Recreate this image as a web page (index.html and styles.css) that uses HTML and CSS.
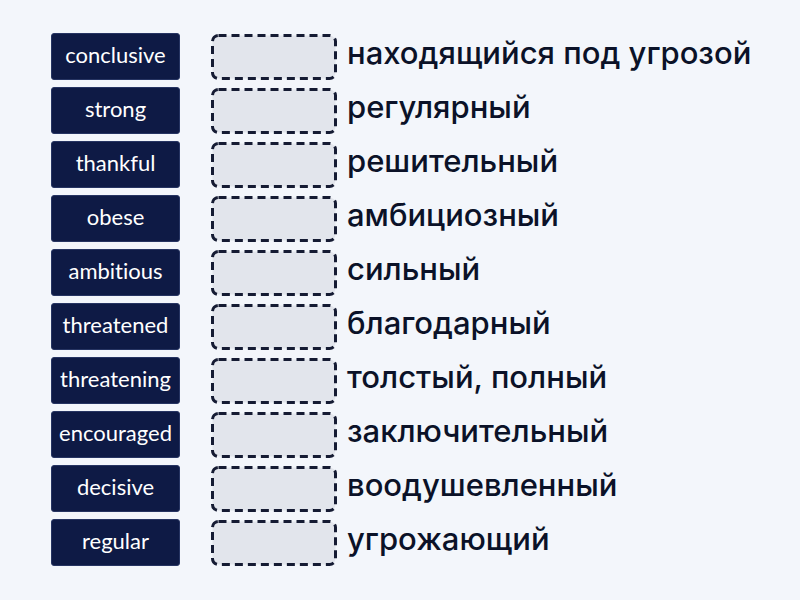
FILE: index.html
```html
<!DOCTYPE html>
<html lang="ru">
<head>
  <meta charset="UTF-8">
  <title>Сопоставление слов</title>
  <link rel="stylesheet" href="styles.css">
</head>
<body>
  <div class="board">
    <!-- Слова для перетаскивания -->
    <div class="words">
      <div class="word">conclusive</div>
      <div class="word">strong</div>
      <div class="word">thankful</div>
      <div class="word">obese</div>
      <div class="word">ambitious</div>
      <div class="word">threatened</div>
      <div class="word">threatening</div>
      <div class="word">encouraged</div>
      <div class="word">decisive</div>
      <div class="word">regular</div>
    </div>

    <!-- Пустые места и переводы -->
    <div class="targets">
      <div class="row"><svg class="slot" viewBox="0 0 126 46"><rect x="1.5" y="1.5" width="123" height="43" rx="6"/></svg><span class="meaning">находящийся под угрозой</span></div>
      <div class="row"><svg class="slot" viewBox="0 0 126 46"><rect x="1.5" y="1.5" width="123" height="43" rx="6"/></svg><span class="meaning">регулярный</span></div>
      <div class="row"><svg class="slot" viewBox="0 0 126 46"><rect x="1.5" y="1.5" width="123" height="43" rx="6"/></svg><span class="meaning">решительный</span></div>
      <div class="row"><svg class="slot" viewBox="0 0 126 46"><rect x="1.5" y="1.5" width="123" height="43" rx="6"/></svg><span class="meaning">амбициозный</span></div>
      <div class="row"><svg class="slot" viewBox="0 0 126 46"><rect x="1.5" y="1.5" width="123" height="43" rx="6"/></svg><span class="meaning">сильный</span></div>
      <div class="row"><svg class="slot" viewBox="0 0 126 46"><rect x="1.5" y="1.5" width="123" height="43" rx="6"/></svg><span class="meaning">благодарный</span></div>
      <div class="row"><svg class="slot" viewBox="0 0 126 46"><rect x="1.5" y="1.5" width="123" height="43" rx="6"/></svg><span class="meaning">толстый, полный</span></div>
      <div class="row"><svg class="slot" viewBox="0 0 126 46"><rect x="1.5" y="1.5" width="123" height="43" rx="6"/></svg><span class="meaning">заключительный</span></div>
      <div class="row"><svg class="slot" viewBox="0 0 126 46"><rect x="1.5" y="1.5" width="123" height="43" rx="6"/></svg><span class="meaning">воодушевленный</span></div>
      <div class="row"><svg class="slot" viewBox="0 0 126 46"><rect x="1.5" y="1.5" width="123" height="43" rx="6"/></svg><span class="meaning">угрожающий</span></div>
    </div>
  </div>
</body>
</html>
```

FILE: styles.css
```css
body {
  margin: 0;
  background-color: #f3f6fb;
  height: 600px;
  overflow: hidden;
}
.board {
  display: flex;
  gap: 31px;
  padding: 33px 0 0 51px;
}
.words {
  display: flex;
  flex-direction: column;
  gap: 7px;
}
.word {
  width: 127px;
  height: 40px;
  padding-bottom: 5px;
  border: 1px solid #263462;
  border-radius: 3px;
  background-color: #0e1a45;
  color: #fff;
  font-family: Lato, sans-serif;
  font-size: 22px;
  font-variant-ligatures: none;
  display: flex;
  align-items: center;
  justify-content: center;
}
.targets {
  display: flex;
  flex-direction: column;
  gap: 7px;
}
.row {
  height: 47px;
  display: flex;
  align-items: center;
  gap: 10px;
}
.slot {
  width: 126px;
  height: 46px;
  flex-shrink: 0;
}
.slot rect {
  fill: #e2e5ec;
  stroke: #151b33;
  stroke-width: 3;
  stroke-dasharray: 8 5;
}
.meaning {
  font-family: Inter, sans-serif;
  font-weight: 500;
  font-size: 31px;
  color: #0b1228;
  white-space: nowrap;
  margin-bottom: 8px;
}
```
